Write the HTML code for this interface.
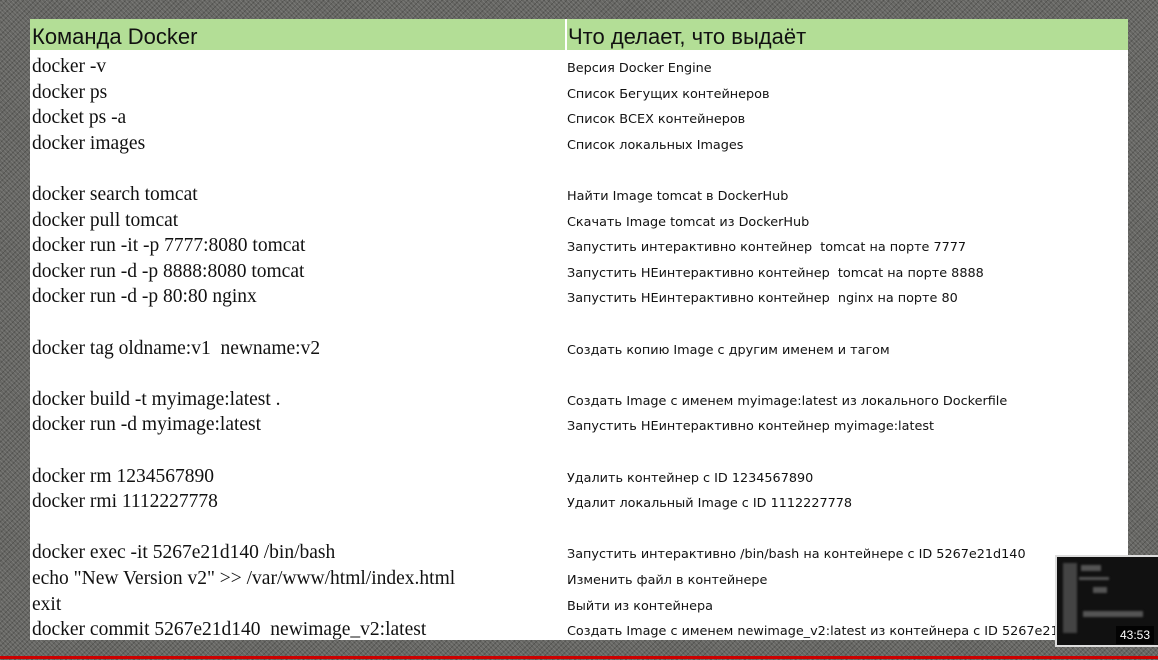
<!DOCTYPE html>
<html><head><meta charset="utf-8"><style>
body{margin:0;width:1158px;height:660px;overflow:hidden;position:relative;
background:#666663;
background-image:repeating-linear-gradient(45deg,rgba(255,255,255,.12) 0 1px,transparent 1px 3px),repeating-linear-gradient(-45deg,rgba(0,0,0,.2) 0 1px,transparent 1px 4px);}
#t{position:absolute;left:30px;top:19px;width:1098px;height:621px;background:#fff;}
#h{position:absolute;left:0;top:0;width:1098px;height:31px;background:#b3de96;}
#h div{position:absolute;top:0;height:31px;line-height:36px;font-family:"Liberation Sans","DejaVu Sans",sans-serif;font-size:22px;color:#111;}
#dv{position:absolute;left:535px;top:0;width:2px;height:31px;background:#fff}
.r{position:absolute;left:0;height:25.6px;width:1098px}
.l{position:absolute;left:2px;top:0;font-family:"Liberation Serif",serif;font-size:19.5px;line-height:25px;color:#111;white-space:nowrap}
.d{position:absolute;left:537px;top:2px;font-family:"DejaVu Sans","Liberation Sans",sans-serif;font-size:12.8px;line-height:25px;color:#111;white-space:nowrap}
#th{position:absolute;left:1055px;top:555px;width:103px;height:92px;background:#111;border:2px solid #ddd;border-right:none;box-sizing:border-box;overflow:hidden}
#th i{position:absolute;background:#555;filter:blur(1px)}
#tm{position:absolute;left:1116px;top:626px;background:rgba(0,0,0,.8);color:#fff;font:12px "Liberation Sans",sans-serif;padding:2px 4px}
#red{position:absolute;left:0;top:656px;width:1158px;height:3px;background:#c00}
</style></head><body>
<div id="t">
<div id="h"><div style="left:2px">Команда Docker</div><div id="dv"></div><div style="left:538px">Что делает, что выдаёт</div></div>
<div class="r" style="top:35px"><span class="l">docker -v</span><span class="d">Версия Docker Engine</span></div>
<div class="r" style="top:60.6px"><span class="l">docker ps</span><span class="d">Список Бегущих контейнеров</span></div>
<div class="r" style="top:86.2px"><span class="l">docket ps -a</span><span class="d">Список ВСЕХ контейнеров</span></div>
<div class="r" style="top:111.8px"><span class="l">docker images</span><span class="d">Список локальных Images</span></div>
<div class="r" style="top:163px"><span class="l">docker search tomcat</span><span class="d">Найти Image tomcat в DockerHub</span></div>
<div class="r" style="top:188.6px"><span class="l">docker pull tomcat</span><span class="d">Скачать Image tomcat из DockerHub</span></div>
<div class="r" style="top:214.2px"><span class="l">docker run -it -p 7777:8080 tomcat</span><span class="d">Запустить интерактивно контейнер &nbsp;tomcat на порте 7777</span></div>
<div class="r" style="top:239.8px"><span class="l">docker run -d -p 8888:8080 tomcat</span><span class="d">Запустить НЕинтерактивно контейнер &nbsp;tomcat на порте 8888</span></div>
<div class="r" style="top:265.4px"><span class="l">docker run -d -p 80:80 nginx</span><span class="d">Запустить НЕинтерактивно контейнер &nbsp;nginx на порте 80</span></div>
<div class="r" style="top:316.6px"><span class="l">docker tag oldname:v1 &nbsp;newname:v2</span><span class="d">Создать копию Image с другим именем и тагом</span></div>
<div class="r" style="top:367.8px"><span class="l">docker build -t myimage:latest .</span><span class="d">Создать Image с именем myimage:latest из локального Dockerfile</span></div>
<div class="r" style="top:393.4px"><span class="l">docker run -d myimage:latest</span><span class="d">Запустить НЕинтерактивно контейнер myimage:latest</span></div>
<div class="r" style="top:444.6px"><span class="l">docker rm 1234567890</span><span class="d">Удалить контейнер с ID 1234567890</span></div>
<div class="r" style="top:470.2px"><span class="l">docker rmi 1112227778</span><span class="d">Удалит локальный Image с ID 1112227778</span></div>
<div class="r" style="top:521.4px"><span class="l">docker exec -it 5267e21d140 /bin/bash</span><span class="d">Запустить интерактивно /bin/bash на контейнере с ID 5267e21d140</span></div>
<div class="r" style="top:547px"><span class="l">echo "New Version v2" &gt;&gt; /var/www/html/index.html</span><span class="d">Изменить файл в контейнере</span></div>
<div class="r" style="top:572.6px"><span class="l">exit</span><span class="d">Выйти из контейнера</span></div>
<div class="r" style="top:598.2px"><span class="l">docker commit 5267e21d140 &nbsp;newimage_v2:latest</span><span class="d">Создать Image с именем newimage_v2:latest из контейнера с ID 5267e21d140</span></div>
</div>
<div id="th"><i style="left:6px;top:6px;width:14px;height:70px;background:#444"></i><i style="left:24px;top:8px;width:20px;height:6px"></i><i style="left:36px;top:30px;width:14px;height:6px"></i><i style="left:26px;top:54px;width:60px;height:6px"></i><i style="left:22px;top:20px;width:30px;height:3px"></i></div>
<div id="tm">43:53</div>
<div id="red"></div>
</body></html>
